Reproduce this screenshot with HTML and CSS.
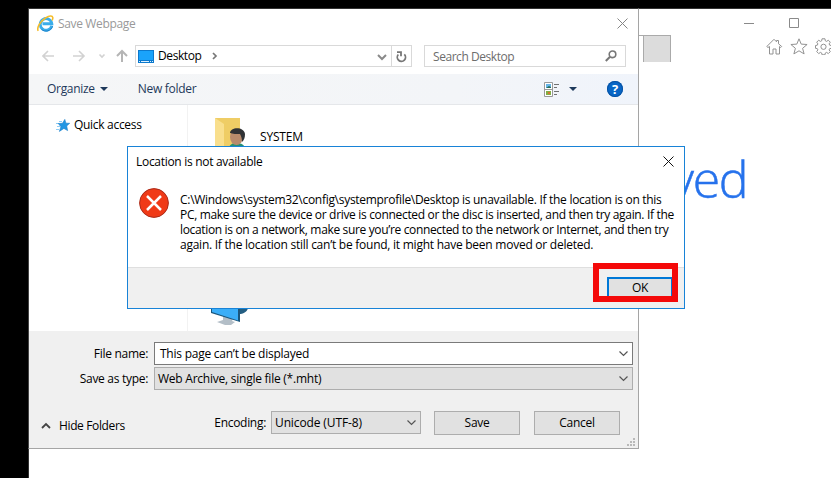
FILE: index.html
```html
<!DOCTYPE html>
<html lang="en">
<head>
<meta charset="utf-8">
<title>Save Webpage</title>
<link rel="stylesheet" href="styles.css">
</head>
<body>
<div class="desktop">
  <main class="browser">
    <div class="window-controls">
      <svg width="56" height="12" viewBox="0 0 56 12" fill="none" stroke="#8a8a8a"><path d="M0 5.500h10M54.500 .5v9h-9v-9z"/></svg>
    </div>
    <div class="tab-strip"><div class="tab"></div></div>
    <div class="tools">
      <svg width="17" height="17" viewBox="0 0 17 17" fill="none" stroke="#929292"><path d="M.8 8.500 8 1.300l2.500 2.500V2.500h2v3.300l3.200 2.700-1 1-1.200-1v7.500h-3.500v-5h-3v5H3.500V8.500l-1.500 1z"/></svg>
      <svg width="18" height="17" viewBox="0 0 18 17" fill="none" stroke="#929292"><path d="m9 .8 2.200 5.300 5.900.4-4.500 3.800 1.500 5.600L9 12.800l-5.100 3.100 1.500-5.600L.9 6.500l5.900-.4z"/></svg>
      <svg width="17" height="17" viewBox="0 0 17 17" fill="none" stroke="#929292"><path d="M7 .8h3l.3 2 1.300.6 1.700-1.200 2 2-1.200 1.700.6 1.300 1.800.3v2.800l-1.800.3-.6 1.300 1.200 1.700-2 2-1.700-1.200-1.300.6-.3 1.800H7l-.3-1.800-1.300-.6-1.700 1.200-2-2 1.200-1.700-.6-1.300-1.800-.3V7.500l1.800-.3.6-1.300-1.200-1.700 2-2 1.700 1.200 1.300-.6z"/><circle cx="8.500" cy="8.800" r="2.600"/></svg>
    </div>
    <h1 class="headline">yed</h1>
  </main>

  <section class="save-window">
    <header class="titlebar">
      <svg width="17" height="17" viewBox="0 0 17 17" fill="none"><path d="M14.700 10.700A5.800 5.800 0 1 1 14.800 8.700H5.500" stroke="#3badea" stroke-width="2.900"/><path d="M15.600 11.300a7 7 0 0 1-11 3.200" stroke="#1679c4" stroke-width=".8"/><path d="M1.200 15.800C-.5 13 3 6.500 8.500 3c4-2.600 7-2.600 7.300-.3.100 1-.3 2-.7 2.800" stroke="#f5bd2b" stroke-width="1.600"/></svg>
      <span class="t-title">Save Webpage</span>
      <svg class="close" width="11" height="11" viewBox="0 0 11 11" stroke="#858585"><path d="m.5.5 10 10M10.500.5l-10 10"/></svg>
    </header>
    <div class="address-row">
      <svg class="arrows" width="86" height="14" viewBox="0 0 86 14" fill="none"><g stroke="#d2d2d2" stroke-width="1.600"><path d="M12 7H1M6 2 1 7l5 5M31 7h11M37 2l5 5-5 5"/><path d="m57.500 5.500 2.500 2.500 2.500-2.500"/></g><path d="M80 13V2M75 7l5-5 5 5" stroke="#b5b5b5" stroke-width="2"/></svg>
      <div class="address">
        <svg width="16" height="13" viewBox="0 0 16 13"><path fill="#0c79cd" d="M0 0h16v13H0z"/><path fill="#1aa3fb" d="M1 1h14v9H1z"/><path d="M1 11.500h1M3 11.500h8M12 11.500h1M14 11.500h1" stroke="#d9efff"/></svg>
        <span class="t-desktop">Desktop</span>
        <svg class="crumb" width="6" height="8" viewBox="0 0 6 8" fill="none" stroke="#777" stroke-width="1.700"><path d="m1 1 3 3-3 3"/></svg>
        <svg class="drop" width="10" height="7" viewBox="0 0 10 7" fill="none" stroke="#8a8a8a" stroke-width="2"><path d="m1 1 4 4 4-4"/></svg>
        <span class="refresh"><svg width="11" height="12" viewBox="0 0 11 12" fill="none" stroke="#777" stroke-width="1.800"><path d="M8.300 3.300A4.100 4.100 0 1 1 2.300 3.500M1 1.200h4v4"/></svg></span>
      </div>
      <div class="search">
        <span class="t-search">Search Desktop</span>
        <svg width="12" height="12" viewBox="0 0 12 12" fill="none" stroke="#777"><circle cx="7.500" cy="4.300" r="3.300" stroke-width="1.600"/><path d="M5 6.800.8 11" stroke-width="2"/></svg>
      </div>
    </div>
    <div class="toolbar">
      <span class="t-organize">Organize</span>
      <i class="caret"></i>
      <span class="t-newfolder">New folder</span>
      <svg class="view" width="16" height="15" viewBox="0 0 16 15"><path d="M.5.500h8v14h-8zM.5 7.500h8" fill="#fff" stroke="#999"/><path fill="#65b5e8" d="M2 2h5v4H2z"/><path fill="#246b56" d="m2 6 3-2 2 1v1z"/><path fill="#83ad45" d="M2 9h5v4H2z"/><path fill="#d47830" d="M4 10h2v2H4z"/><path d="M10 2.500h5M10 5.500h3M10 9.500h5M10 12.500h3" stroke="#727272"/></svg>
      <i class="caret caret-view"></i>
      <span class="help">?</span>
    </div>
    <div class="content">
      <nav class="sidebar">
        <svg width="14" height="13" viewBox="0 0 14 13"><path d="M3 2.500h3M0 4.500h3M1 7.500h3M0 10.500h3" stroke="#8fcdf5"/><path fill="#2196e3" stroke="#1b7fc9" stroke-width=".6" d="m8.800.4 1.100 3.800 3.800.1-3 2.600.9 4.700-3.700-2.200-4.500 3 1.500-4.700-2.600-3.200 4.200-.2z"/></svg>
        <span class="t-quick">Quick access</span>
      </nav>
      <div class="files">
        <div class="file">
          <svg width="32" height="32" viewBox="0 0 32 32"><path fill="#efcd65" d="M0 0h25v30H0z"/><path fill="#f9df8d" d="m0 0 9 6v26H0z"/><path fill="#269074" d="M14 31c0-5 4-6 8-6s8 2 8 6z"/><ellipse cx="21.500" cy="19" rx="6.500" ry="8" fill="#b88b6c"/><path fill="#303235" d="M15 15c0-6 14-7 15 1 0 4-1 6-3 8 0-4-1-6-2-8-4 0-7 0-10-1z"/></svg>
          <span class="t-system">SYSTEM</span>
        </div>
        <svg class="pc" width="40" height="48" viewBox="0 0 40 48"><path fill="#245e82" d="m27 0 10 30c-1 4-5 6-9 6z"/><path fill="#b3bec7" d="m12 38 10 3-1 2 3 1-4 3h-6l-8-3 6-2z"/><path fill="#1b567c" d="M0 0h29v44L0 35z"/><path fill="#3baef8" d="M1 0h26v42.500L1 34z"/></svg>
      </div>
    </div>
    <footer class="save-form">
      <label class="form-label l-name"><span>File name:</span></label>
      <div class="field name-field"><span class="t-file">This page can’t be displayed</span><svg class="chev" width="9" height="6" viewBox="0 0 9 6"><path d="m.5.500 4 4 4-4"/></svg></div>
      <label class="form-label l-type"><span>Save as type:</span></label>
      <div class="field type-field"><span class="t-type">Web Archive, single file (*.mht)</span><svg class="chev" width="9" height="6" viewBox="0 0 9 6"><path d="m.5.500 4 4 4-4"/></svg></div>
      <div class="actions">
        <svg width="10" height="7" viewBox="0 0 10 7" fill="none" stroke="#444" stroke-width="1.800"><path d="m1 6 4-4 4 4"/></svg>
        <span class="t-hide">Hide Folders</span>
        <span class="t-encoding">Encoding:</span>
        <div class="field enc-field"><span class="t-unicode">Unicode (UTF-8)</span><svg class="chev" width="9" height="6" viewBox="0 0 9 6"><path d="m.5.500 4 4 4-4"/></svg></div>
        <button class="t-save">Save</button>
        <button class="t-cancel">Cancel</button>
      </div>
      <svg class="grip" width="8" height="8" viewBox="0 0 8 8" fill="#b9b9b9"><path d="M6 0h2v2H6zM3 3h2v2H3zM6 3h2v2H6zM0 6h2v2H0zM3 6h2v2H3zM6 6h2v2H6z"/></svg>
    </footer>
  </section>

  <section class="alert">
    <header class="alert-title">
      <span class="t-location">Location is not available</span>
      <svg width="11" height="11" viewBox="0 0 11 11" stroke="#111"><path d="m.5.500 10 10M10.500.5l-10 10"/></svg>
    </header>
    <div class="alert-body">
      <svg width="30" height="30" viewBox="0 0 30 30"><circle cx="15" cy="15" r="14.400" fill="#f03a17" stroke="#a92c1b"/><path d="m8 8 14 14M22 8 8 22" stroke="#fff" stroke-width="2.500"/></svg>
      <p>
        <span class="line line-1">C:\Windows\system32\config\systemprofile\Desktop is unavailable. If the location is on this</span>
        <span class="line line-2">PC, make sure the device or drive is connected or the disc is inserted, and then try again. If the</span>
        <span class="line line-3">location is on a network, make sure you’re connected to the network or Internet, and then try</span>
        <span class="line line-4">again. If the location still can’t be found, it might have been moved or deleted.</span>
      </p>
    </div>
    <footer class="alert-footer"><div class="highlight"><div class="ok">OK</div></div></footer>
  </section>
</div>
</body>
</html>
```

FILE: styles.css
```css
* { box-sizing: border-box; }
html, body { margin: 0; width: 831px; height: 478px; overflow: hidden; }
body { font: 12px/16px "Open Sans", "Noto Sans", sans-serif; letter-spacing: -0.3px; color: #000; }
svg { display: block; flex: none; }
span { white-space: nowrap; }
.desktop { position: relative; width: 831px; height: 478px; background: #000; padding: 8px 0 0 28px; overflow: hidden; }

.browser { height: 470px; background: #fff; border-top: 1px solid #333; border-left: 1px solid #333; padding-left: 609px; display: grid; grid-template: 26px 27px 87px 60px / 33px 1fr; }
.window-controls { grid-column: 1 / 3; padding: 9px 0 0 106px; }
.tab-strip { border-top: 1px solid #aaa; padding-left: 5px; display: flex; }
.tab { flex: 1; background: #dcdcdc; border: 1px solid #aaa; border-width: 0 1px; }
.tools { display: flex; gap: 7px; padding: 3px 0 0 95px; }
.headline { grid-area: 4 / 1 / 5 / 3; margin: 0; padding-left: 33px; font: 300 50px/60px "Open Sans", sans-serif; letter-spacing: -1.300px; color: #2672ec; -webkit-text-stroke: 0.5px #2672ec; }

.save-window { position: absolute; left: 28px; top: 8px; width: 611px; height: 441px; background: #fff; border: 1px solid #a5a5a5; border-top-color: #333; border-left-color: #444; display: flex; flex-direction: column; }
.save-window > * { flex: none; }
.titlebar { height: 36px; display: flex; align-items: flex-start; padding: 6px 10px 0 8px; }
.titlebar span { margin-left: 4px; line-height: 17px; color: #999; letter-spacing: -0.35px; }
.close { margin: 3px 0 0 auto; }
.address-row { height: 29px; padding: 0 12px 7px 13px; display: flex; }
.arrows { margin: 4px 7px 0 0; }
.address { width: 277px; height: 22px; border: 1px solid #d9d9d9; display: flex; align-items: center; padding-left: 2px; }
.address span { margin-left: 4px; letter-spacing: -0.4px; }
.address .crumb { margin-left: 10px; }
.drop { margin: 3px 4px 0 auto; }
.address .refresh { margin: 0; width: 20px; height: 20px; border-left: 1px solid #d9d9d9; padding: 5px 0 0 4px; }
.search { margin-left: 12px; width: 202px; height: 22px; border: 1px solid #d9d9d9; display: flex; align-items: center; justify-content: space-between; padding: 0 8px; color: #6d6d6d; letter-spacing: -0.45px; }
.t-search { padding-top: 2px; }
.toolbar { height: 31px; background: linear-gradient(90deg, #f5f6f7, #f3f5f8 70%, #f0f4fb); border-bottom: 1px solid #e5e7ea; color: #1e395b; display: flex; align-items: center; padding: 0 15px 0 18px; }
.caret { border: 4px solid transparent; border-top-color: #1e395b; border-bottom: 0; margin-left: 5px; }
.t-newfolder { margin-left: 30px; }
.view { margin-left: auto; }
.caret-view { margin-left: 9px; margin-right: 30px; }
.help { width: 16px; height: 16px; border-radius: 50%; background: #0866c6; box-shadow: inset 0 0 0 1px #0752a3; color: #fff; font-weight: 700; font-size: 13px; line-height: 16px; text-align: center; letter-spacing: 0; }
.content { height: 226px; display: flex; }
.sidebar { width: 159px; border-right: 1px solid #f2f2f2; display: flex; align-items: flex-start; padding: 14px 0 0 27px; }
.sidebar span { margin: -2px 0 0 4px; }
.files { padding: 13px 0 0 27px; }
.file { display: flex; }
.file span { margin: 11px 0 0 13px; letter-spacing: -0.2px; }
.pc { margin: 128px 0 0 -4px; }
.save-form { height: 117px; background: #f0f0f0; padding: 11px 5px 0 0; display: grid; grid-template: 23px 23px 43px / 125px 479px; row-gap: 2px; align-content: start; overflow: hidden; }
.form-label { text-align: right; padding: 4px 6px 0 0; }
.field { border: 1px solid #adadad; background: #e1e1e1; display: flex; align-items: center; justify-content: space-between; padding: 0 4px 0 3px; height: 23px; }
.name-field { background: #fff; border-color: #7a7a7a; padding-left: 5px; }
.t-file, .t-type { letter-spacing: -0.24px; }
.t-unicode { letter-spacing: -0.12px; }
.chev { fill: none; stroke: #555; stroke-width: 1.200; }
.actions { grid-column: 1 / 3; padding: 19px 0 0 12px; display: flex; }
.actions > svg { margin-top: 11px; }
.t-hide { margin: 7px 0 0 8px; letter-spacing: -0.37px; }
.t-encoding { margin: 4px 5px 0 auto; }
.enc-field { width: 150px; }
button { width: 86px; height: 24px; border: 1px solid #adadad; background: #e1e1e1; padding: 0; font: inherit; letter-spacing: inherit; color: #000; margin-left: 13px; }
button + button { margin-left: 14px; margin-right: 13px; }
.grip { grid-column: 2; justify-self: end; margin: 1px -2px 0 0; }

.alert { position: absolute; left: 127px; top: 146px; width: 558px; height: 163px; background: #fff; border: 1px solid #1883d7; display: flex; flex-direction: column; }
.alert-title { height: 41px; padding: 7px 10px 0 8px; display: flex; justify-content: space-between; }
.alert-title svg { margin-top: 2px; }
.alert-body { height: 79px; padding-left: 11px; display: flex; }
.alert-body p { margin: 4px 0 0 11px; line-height: 15px; }
.line { display: block; }
.line-1 { letter-spacing: -0.29px; }
.line-2 { letter-spacing: -0.325px; }
.line-3 { letter-spacing: -0.345px; }
.line-4 { letter-spacing: -0.25px; }
.alert-footer { height: 41px; background: #f0f0f0; border-top: 1px solid #dfdfdf; padding-left: 465px; }
.highlight { position: relative; top: -5px; width: 85px; height: 39px; border: 6px solid #f40909; padding: 8px 0 0 8px; overflow: hidden; }
.ok { width: 66px; height: 24px; border: 2px solid #0078d7; background: #e1e1e1; text-align: center; line-height: 18px; }
```
